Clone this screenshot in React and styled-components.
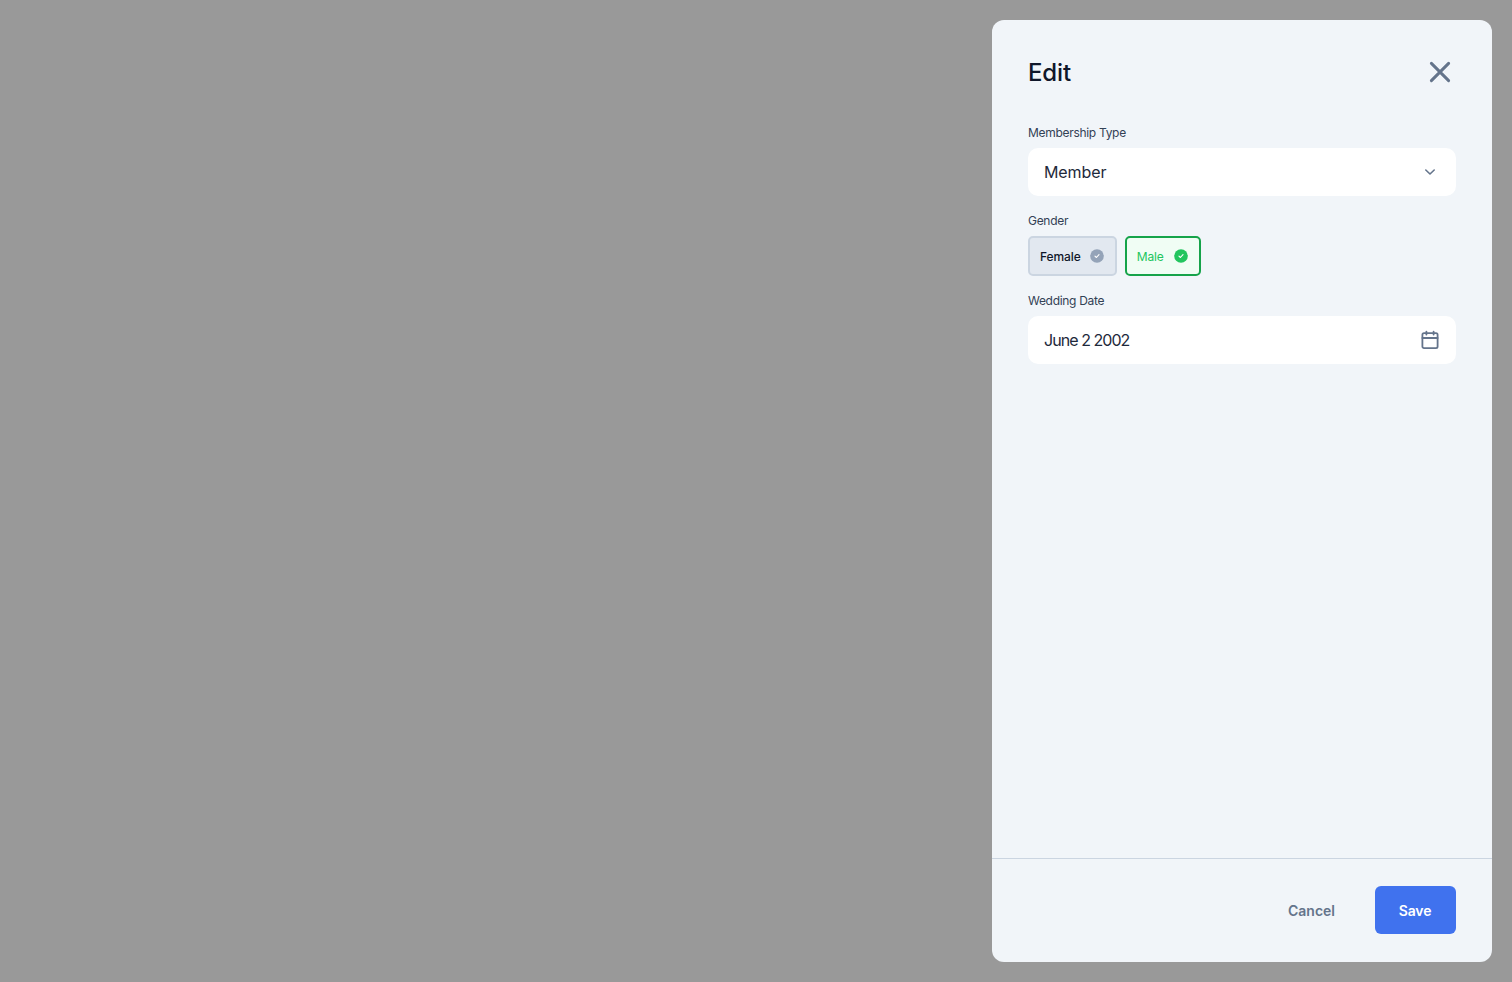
import React from "react";
import styled, { createGlobalStyle } from "styled-components";

const GlobalStyle = createGlobalStyle`
  html, body {
    margin: 0;
    padding: 0;
    height: 100%;
    font-family: Inter, "Noto Sans", sans-serif;
  }
  * { box-sizing: border-box; }
`;

function CheckBadge({ color }) {
  return (
    <svg width="14" height="14" viewBox="0 0 14 14">
      <circle cx="7" cy="7" r="6.8" fill={color} />
      <path d="M5 7.2l1.4 1.3 2.6-2.8" fill="none" stroke="#fff" strokeWidth="1.1" strokeLinecap="round" strokeLinejoin="round" />
    </svg>
  );
}

export default function App() {
  return (
    <>
      <GlobalStyle />
      <Overlay>
        <Panel>
          <Body>
            <Header>
              <Title>Edit</Title>
              <CloseButton aria-label="Close">
                <svg width="24" height="24" viewBox="0 0 24 24" fill="none" stroke="#64748B" strokeWidth="3" strokeLinecap="round">
                  <path d="M3.4 3.4l17.2 17.2M20.6 3.4L3.4 20.6" />
                </svg>
              </CloseButton>
            </Header>

            <Field>
              <Label>Membership Type</Label>
              <InputBox>
                <InputText>Member</InputText>
                <svg width="20" height="20" viewBox="0 0 20 20" fill="none" stroke="#64748B" strokeWidth="1.6" strokeLinecap="round" strokeLinejoin="round">
                  <path d="M5.8 8l4.2 4 4.2-4" />
                </svg>
              </InputBox>
            </Field>

            <Field>
              <Label>Gender</Label>
              <ChipRow>
                <Chip>
                  Female
                  <CheckBadge color="#94A3B8" />
                </Chip>
                <Chip $active>
                  Male
                  <CheckBadge color="#22C55E" />
                </Chip>
              </ChipRow>
            </Field>

            <Field>
              <Label>Wedding Date</Label>
              <InputBox>
                <InputText $tight>June 2 2002</InputText>
                <svg width="20" height="20" viewBox="0 0 20 20" fill="none" stroke="#64748B" strokeWidth="1.8" strokeLinecap="round" strokeLinejoin="round">
                  <rect x="2.4" y="3.2" width="15.2" height="15" rx="1.6" />
                  <path d="M2.4 8h15.2M6.4 1.6v3M13.6 1.6v3" />
                </svg>
              </InputBox>
            </Field>
          </Body>

          <Footer>
            <CancelButton>Cancel</CancelButton>
            <SaveButton>Save</SaveButton>
          </Footer>
        </Panel>
      </Overlay>
    </>
  );
}

const Overlay = styled.div`
  width: 100%;
  height: 982px;
  padding: 20px;
  background: #999999;
  display: flex;
  justify-content: flex-end;
`;
const Panel = styled.div`
  width: 500px;
  height: 942px;
  background: #f1f5f9;
  border-radius: 12px;
  display: flex;
  flex-direction: column;
  overflow: hidden;
`;
const Body = styled.div`
  flex: 1;
  padding: 36px 36px 0;
  display: flex;
  flex-direction: column;
  gap: 16px;
`;
const Header = styled.div`
  height: 32px;
  margin-bottom: 20px;
  display: flex;
  align-items: center;
  justify-content: space-between;
`;
const Title = styled.h2`
  margin: 0;
  padding-top: 2px;
  font-size: 24px;
  line-height: 32px;
  font-weight: 500;
  letter-spacing: -0.15px;
  color: #0f172a;
`;
const CloseButton = styled.button`
  width: 24px;
  height: 24px;
  margin-right: 4px;
  padding: 0;
  border: none;
  background: none;
  display: flex;
`;
const Field = styled.div`
  display: flex;
  flex-direction: column;
  gap: 6px;
`;
const Label = styled.label`
  font-size: 12px;
  line-height: 18px;
  font-weight: 400;
  letter-spacing: -0.3px;
  color: #334155;
`;
const InputBox = styled.div`
  height: 48px;
  padding: 0 16px;
  background: #ffffff;
  border-radius: 10px;
  display: flex;
  align-items: center;
  justify-content: space-between;
`;
const InputText = styled.span`
  font-size: 16px;
  line-height: 24px;
  font-weight: 400;
  letter-spacing: ${(p) => (p.$tight ? "-0.95px" : "-0.1px")};
  color: #1e293b;
`;
const ChipRow = styled.div`
  display: flex;
  gap: 8px;
`;
const Chip = styled.div`
  height: 40px;
  padding: 0 11px 0 10px;
  display: flex;
  align-items: center;
  gap: ${(p) => (p.$active ? "10px" : "9px")};
  border-radius: 5px;
  font-size: 12px;
  font-weight: ${(p) => (p.$active ? "400" : "500")};
  letter-spacing: -0.1px;
  border: 2px solid ${(p) => (p.$active ? "#16A34A" : "#CBD5E1")};
  background: ${(p) => (p.$active ? "#F0FDF4" : "#E2E8F0")};
  color: ${(p) => (p.$active ? "#22C55E" : "#0F172A")};
`;
const Footer = styled.div`
  height: 104px;
  padding: 27px 36px 28px;
  border-top: 1px solid #cbd5e1;
  display: flex;
  justify-content: flex-end;
  gap: 40px;
  align-items: center;
`;
const CancelButton = styled.button`
  padding: 0;
  border: none;
  background: none;
  font-family: inherit;
  font-size: 14px;
  font-weight: 600;
  color: #64748b;
`;
const SaveButton = styled.button`
  width: 81px;
  height: 48px;
  padding: 0 1px 0 0;
  border: none;
  border-radius: 6px;
  background: #4072ee;
  color: #ffffff;
  font-family: inherit;
  font-size: 14px;
  font-weight: 600;
  letter-spacing: -0.1px;
`;
